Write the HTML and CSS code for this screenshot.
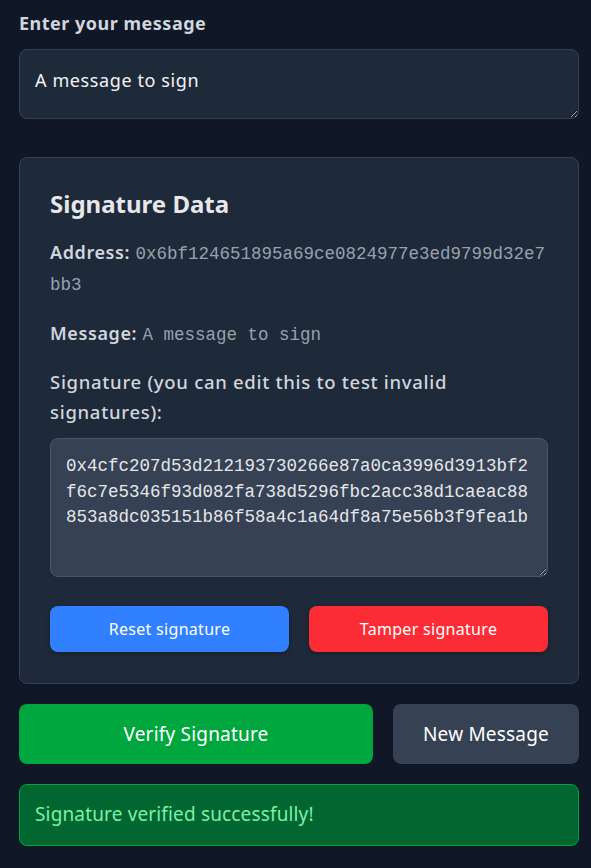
FILE: index.html
```html
<!DOCTYPE html>
<html lang="en">
<head>
<meta charset="utf-8">
<title>Sign message</title>
<link rel="stylesheet" href="styles.css">
</head>
<body>
<main class="page">
  <label class="field-label" for="msg">Enter your message</label>
  <textarea id="msg" class="msg-input">A message to sign</textarea>

  <section class="card">
    <h2 class="card-title">Signature Data</h2>
    <p class="row"><span class="key">Address:</span> <span class="mono">0x6bf124651895a69ce0824977e3ed9799d32e7bb3</span></p>
    <p class="row"><span class="key">Message:</span> <span class="mono">A message to sign</span></p>
    <p class="sig-label">Signature (you can edit this to test invalid signatures):</p>
    <textarea class="sig-input">0x4cfc207d53d212193730266e87a0ca3996d3913bf2f6c7e5346f93d082fa738d5296fbc2acc38d1caeac88853a8dc035151b86f58a4c1a64df8a75e56b3f9fea1b</textarea>
    <div class="btn-row">
      <button class="btn btn-blue">Reset signature</button>
      <button class="btn btn-red">Tamper signature</button>
    </div>
  </section>

  <div class="actions">
    <button class="big-btn btn-green">Verify Signature</button>
    <button class="big-btn btn-gray">New Message</button>
  </div>

  <div class="success">Signature verified successfully!</div>
</main>
</body>
</html>
```

FILE: styles.css
```css
* { box-sizing: border-box; }
html, body {
  margin: 0;
  background: #101828;
}
body {
  font-family: "Noto Sans", "Open Sans", sans-serif;
  color: #d1d5dc;
}
.page {
  padding: 10px 12px 20px 19px;
  display: flex;
  flex-direction: column;
}
.field-label {
  font-size: 18px;
  font-weight: 700;
  letter-spacing: 0.5px;
  line-height: 27px;
  color: #d1d5dc;
  margin-bottom: 12px;
}
.msg-input {
  display: block;
  width: 560px;
  height: 70px;
  background: #1e2939;
  border: 1px solid #364153;
  border-radius: 8px;
  color: #f3f4f6;
  font-family: inherit;
  font-size: 18px;
  letter-spacing: 0.6px;
  line-height: 26px;
  padding: 17px 15px;
  margin: 0 0 38px 0;
  resize: vertical;
  outline: none;
}
.card {
  width: 560px;
  background: #1e2939;
  border: 1px solid #364153;
  border-radius: 8px;
  padding: 30px 30px 31px 30px;
}
.card-title {
  margin: 0 0 17px 0;
  font-size: 24px;
  font-weight: 700;
  line-height: 32px;
  color: #e5e7eb;
}
.row {
  margin: 0 0 19px 0;
  font-size: 18px;
  letter-spacing: 0.6px;
  line-height: 31px;
  word-break: break-all;
}
.key {
  font-weight: 600;
  color: #d1d5dc;
}
.mono {
  font-family: "Liberation Mono", monospace;
  font-size: 17.5px;
  letter-spacing: 0;
  line-height: 1;
  color: #99a1af;
}
.sig-label {
  margin: -1px 0 11px 0;
  font-size: 18.5px;
  letter-spacing: 0.7px;
  font-weight: 500;
  line-height: 30px;
  color: #d1d5dc;
}
.sig-input {
  display: block;
  width: 498px;
  height: 139px;
  background: #364153;
  border: 1px solid #4a5565;
  border-radius: 8px;
  color: #e5e7eb;
  font-family: "Liberation Mono", monospace;
  font-size: 17.5px;
  line-height: 25.5px;
  padding: 15px 15px;
  margin: 0 0 29px 0;
  word-break: break-all;
  resize: vertical;
  outline: none;
}
.btn-row {
  display: flex;
  gap: 20px;
}
.btn {
  flex: 1;
  height: 46px;
  border: none;
  border-radius: 8px;
  color: #ffffff;
  font-family: inherit;
  font-size: 16px;
  letter-spacing: 0.3px;
  box-shadow: 0 2px 4px rgba(0,0,0,0.25);
}
.btn-blue { background: #3080ff; }
.btn-red { background: #fb2c36; }
.actions {
  display: flex;
  gap: 20px;
  width: 560px;
  margin-top: 20px;
}
.big-btn {
  height: 60px;
  border: none;
  border-radius: 8px;
  color: #ffffff;
  font-family: inherit;
  font-size: 19px;
  letter-spacing: 0.2px;
}
.btn-green {
  flex: 1;
  background: #00a63e;
}
.btn-gray {
  width: 186px;
  background: #364153;
}
.success {
  width: 560px;
  height: 62px;
  margin-top: 20px;
  background: #016630;
  border: 1px solid #00a63e;
  border-radius: 8px;
  color: #7bf1a8;
  font-size: 19px;
  letter-spacing: 0.15px;
  line-height: 27px;
  padding: 16px 15px;
}
```
